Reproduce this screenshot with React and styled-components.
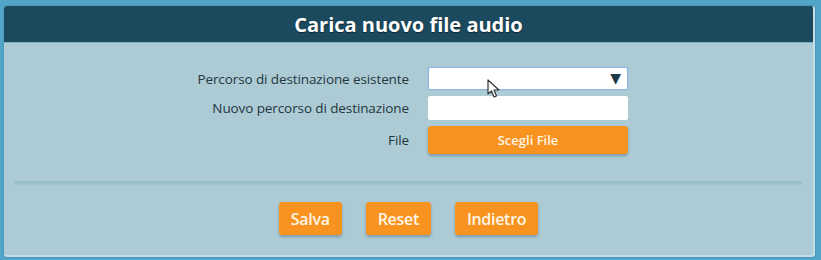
import React from "react";
import styled, {createGlobalStyle} from "styled-components";

const Global = createGlobalStyle`
  html, body {
    margin: 0;
    background: #52a5c9;
  }
  body {
    font-family: "Open Sans", "DejaVu Sans", sans-serif;
  }
`;

const Page = styled.div`
  position: relative;
  width: 821px;
  height: 260px;
  box-sizing: border-box;
  padding: 6px 6px 3px 4px;
`;

const Panel = styled.div`
  background: #accbd5;
  border-radius: 3px;
  border-right: 2px solid #c4dde5;
  border-bottom: 2px solid #c4dde5;
  box-shadow: 0 0 2px rgba(20, 60, 80, 0.4);
  overflow: hidden;
  height: 251px;
  box-sizing: border-box;
  display: flex;
  flex-direction: column;
`;

const Header = styled.div`
  height: 36px;
  background: #1b4a5e;
  display: flex;
  align-items: center;
  justify-content: center;
  border-bottom: 1px solid #7fb2c4;
`;

const Title = styled.h1`
  margin: 0;
  color: #fff;
  font-size: 20px;
  font-weight: 700;
  letter-spacing: 0;
  text-shadow: 0 1px 1px rgba(0, 0, 0, 0.5);
`;

const Form = styled.div`
  display: grid;
  grid-template-columns: 405px 200px;
  column-gap: 19px;
  row-gap: 6px;
  align-items: center;
  padding-top: 24px;
`;

const Label = styled.label`
  text-align: right;
  font-size: 13.5px;
  color: #24363d;
  letter-spacing: -0.1px;
`;

const Field = styled.div`
  position: relative;
  height: ${({h}) => h}px;
  box-sizing: border-box;
  background: #fff;
  border: 1px solid ${({$focus}) => ($focus ? "#8fb3e6" : "#fff")};
  border-radius: 2px;
  box-shadow: ${({$focus}) => ($focus ? "0 0 1px #6f9fd8" : "none")};
`;

const Arrow = styled.span`
  position: absolute;
  right: 6px;
  top: 3px;
  font-size: 14px;
  line-height: 1;
  color: #1b3b4a;
`;

const OrangeButton = styled.button`
  font-family: inherit;
  background: #f7931e;
  color: #fff6e6;
  border: none;
  border-radius: 3px;
  box-shadow: 0 2px 3px rgba(40, 70, 80, 0.35);
  font-weight: 600;
  cursor: pointer;
`;

const FileButton = styled(OrangeButton)`
  height: 28px;
  font-size: 13px;
  width: 200px;
`;

const Separator = styled.div`
  margin: 27px 11px 0 11px;
  height: 3px;
  background: #97bdc9;
  border-bottom: 1px solid #a3c5d0;
`;

const Actions = styled.div`
  display: flex;
  justify-content: center;
  gap: 24px;
  padding-top: 17px;
`;

const ActionButton = styled(OrangeButton)`
  height: 33px;
  padding: 0 12px;
  font-size: 16px;
  letter-spacing: -0.3px;
`;

const Pointer = styled.svg`
  position: absolute;
  left: 487px;
  top: 79px;
`;

export default function App() {
  return (
    <Page>
      <Global/>
      <Panel>
        <Header>
          <Title>Carica nuovo file audio</Title>
        </Header>
        <Form>
          <Label>Percorso di destinazione esistente</Label>
          <Field h={23} $focus>
            <Arrow>▼</Arrow>
          </Field>
          <Label>Nuovo percorso di destinazione</Label>
          <Field h={24}/>
          <Label>File</Label>
          <FileButton>Scegli File</FileButton>
        </Form>
        <Separator/>
        <Actions>
          <ActionButton>Salva</ActionButton>
          <ActionButton>Reset</ActionButton>
          <ActionButton>Indietro</ActionButton>
        </Actions>
      </Panel>
      <Pointer width="14" height="20" viewBox="0 0 14 20">
        <path d="M1 1 L1 15 L4.5 12 L7 18 L9.5 17 L7 11 L12 11 Z" fill="#fff" stroke="#333" strokeWidth="1.2" strokeLinejoin="round"/>
      </Pointer>
    </Page>
  );
}
